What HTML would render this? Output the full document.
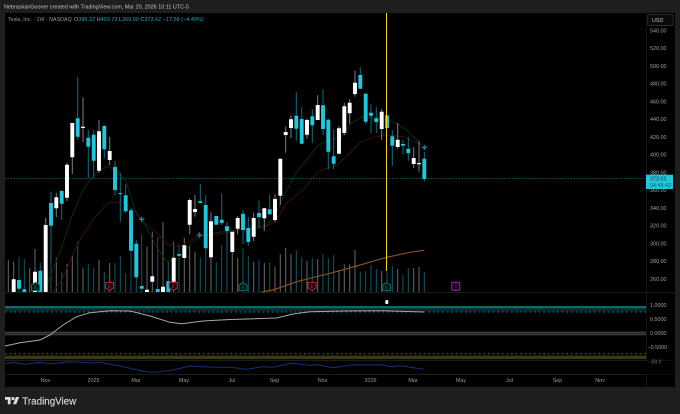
<!DOCTYPE html>
<html><head><meta charset="utf-8"><style>
html,body{margin:0;padding:0;background:#1e1e1e;width:680px;height:414px;overflow:hidden}
svg{position:absolute;left:0;top:0;display:block}
text{font-family:"Liberation Sans",sans-serif}
</style></head><body>
<svg width="680" height="414" viewBox="0 0 680 414" xmlns="http://www.w3.org/2000/svg">
<rect width="680" height="414" fill="#1e1e1e"/>
<rect x="5" y="13" width="670" height="374" fill="#000"/>
<text x="4" y="8.5" font-size="5.43" fill="#c4c4c4">NebraskanGooner created with TradingView.com, Mar 20, 2026 10:11 UTC-5</text>
<text x="8" y="21" font-size="5.3" fill="#9a9a9a">Tesla, Inc. · 1W · NASDAQ</text>
<text x="74" y="21" font-size="5.5" fill="#9a9a9a">O<tspan fill="#1aa9bd">396.22</tspan> H<tspan fill="#1aa9bd">403.73</tspan> L<tspan fill="#1aa9bd">369.90</tspan> C<tspan fill="#1aa9bd">373.62</tspan> <tspan fill="#1aa9bd">−17.58 (−4.49%)</tspan></text>

<!-- separators -->
<path d="M5 292.5H675M5 360.5H675M5 374.5H675" stroke="#1c1c1c" stroke-width="1" fill="none"/>
<path d="M646.5 13V387" stroke="#141414" stroke-width="1" fill="none"/>

<!-- volumes -->
<path fill="none" stroke="#6a6a6a" stroke-width="1" d="M8.3 260V292M13.7 261.7V292M29.7 267.7V292M35 249V292M56.3 258V292M67 264V292M72.3 255V292M83 268V292M99 260V292M109.7 263V292M147 246.7V292M152.3 231.7V292M163 222V292M173.7 241.7V292M184.3 237.7V292M189.7 246V292M195 251.7V292M211 257V292M232.3 252V292M237.7 258V292M253.7 262V292M264.3 263V292M275 266.7V292M280.3 254.3V292M285.7 248V292M291 254.3V292M307 260.7V292M317.7 259.3V292M339 270V292M344.3 264.3V292M349.7 264.3V292M355 250V292M381.7 271V292M397.7 268.7V292M413.7 268V292M419 267V292"/>
<path fill="none" stroke="#0d5a68" stroke-width="1" d="M19 257V292M24.3 259V292M40.3 262.7V292M51 262V292M61.7 271.7V292M77.7 241.7V292M88.3 264V292M93.7 268V292M104.3 271.7V292M115 263V292M120.3 255.7V292M125.7 273V292M131 251V292M136.3 277V292M141.7 235V292M157.7 237V292M168.3 261.7V292M179 244V292M200.3 258V292M205.7 250V292M216.3 262V292M221.7 245V292M227 250V292M243 248V292M248.3 255.7V292M259 260V292M269.7 262V292M296.3 250.3V292M301.7 257.3V292M312.3 258.3V292M323 254.3V292M328.3 258.3V292M333.7 255V292M360.3 271.7V292M365.7 271V292M371 265V292M376.3 269V292M387 272V292M392.3 266V292M403 275V292M408.3 268.3V292M424.3 271.7V292"/>

<!-- volume MA -->
<path fill="none" stroke="#8a4f1c" stroke-width="1.2" d="M261.7 292L273 290L296.7 281.7L330 273.3L356.7 266L386.7 257.3L410 252.3L424.3 250.3"/>

<!-- MAs -->
<path fill="none" stroke="#0b2c14" stroke-width="1" d="M48 283L56.7 260L63.3 243L71.7 216.7L81.7 193L90 180L98 172L108 166L120 173L126.7 183L135 210L145 225L156.7 246.7L166.7 261.7L178 259L191.7 243L200 236.7L213 233L230 231L256.7 227L266.7 225L275 216.7L281.7 200L287 190L296.7 171.7L306.7 160L318 145L330 140L341.7 136.7L351.7 123L361.7 116.7L376.7 118L393 121.7L406.7 130L421.7 145"/>
<path fill="none" stroke="#3e0c0f" stroke-width="1" d="M53 292L61.7 280L71.7 256.7L81.7 236.7L96.7 215L108 203L121.7 201.7L131.7 208L143 221.7L156.7 233L168 245L180 247L196.7 236.7L213 235L230 232.5L243 229L263 228L275 221.7L286.7 203L303 190L318 171.7L336.7 165L348 155L360 142.7L373.3 137.3L386.7 135L403 136.7L421.7 145"/>

<!-- last price line -->
<path d="M5 178.5H646" stroke="#0f5a66" stroke-width="1" stroke-dasharray="1.4 1.4" fill="none"/>

<!-- wicks -->
<path fill="none" stroke="#808080" stroke-width="1" d="M45.7 218V225M56.3 193V217M67 162.7V201M72.3 157V174M83 97.3V142M99 120V172.7M109.7 136.7V165M189.7 198.3V234M195 195V216.7M211 212.3V221M237.7 216V234.3M253.7 212.7V241M264.3 207.7V231M275 194.3V221.7M280.3 195V205M285.7 126.7V152.7M291 115.3V138M307 118.3V138.7M317.7 95.3V120M339 126V154M344.3 102.7V135.3M349.7 99.3V124M355 70.7V96.7M381.7 108.7V140M397.7 123V148.7M413.7 147.3V168M419 140.7V171.7"/>
<path fill="none" stroke="#0f6f80" stroke-width="1" d="M51 191.7V262M61.7 190V220M77.7 76.7V140M88.3 130V178M93.7 130V178M104.3 125V158M115 160.7V195M120.3 173V221.7M125.7 184.3V213M131 208V251M136.3 240V278M200.3 184V203M205.7 195V250M221.7 193.3V225M227 222V250M243 210.3V243.7M248.3 217V246M259 200.7V227.7M269.7 194.7V215M296.3 92.3V140.7M301.7 107.3V144M312.3 109.3V142.7M323 89.3V135M328.3 119V169.3M333.7 129.3V169.3M360.3 67.3V89M365.7 93V124M371 104V133.3M376.3 106.7V133M392.3 130V166M403 140V154.7M408.3 137.3V160.7M424.3 152V181.7"/>

<!-- bodies -->
<path fill="none" stroke="#fff" stroke-width="3.9" d="M13.7 279.3V292M35 271.7V292M45.7 225V292M56.3 197.3V208.3M67 164.7V197.7M72.3 123V157.3M83 126.8V128M99 131.3V170.7M109.7 151V160M147 289.7V292M152.3 276.3V281.7M163 286.7V292M173.7 257.7V281.7M184.3 245.3V258M189.7 200V224.7M195 209V212M211 221.3V257.3M232.3 231.7V252M237.7 218V228.7M253.7 218V236.7M264.3 208.3V218.3M275 199V220M280.3 158.7V195.7M285.7 132V135M291 119.3V128M307 120V134.7M317.7 105V120M339 128.3V153.7M344.3 106.3V133M349.7 102.7V113.3M355 82.7V94M381.7 111.7V129M397.7 139.7V147M413.7 158V164M419 163V164.3"/>
<path fill="none" stroke="#1fc6dc" stroke-width="3.9" d="M19 280V288.7M24.3 289.3V292M40.3 270.7V292M51 203V225.7M61.7 191V203.7M77.7 118.3V136.7M88.3 137.7V146.7M93.7 134.7V160.7M104.3 126V149.3M115 167V190M120.3 193V194M125.7 195.3V211.3M131 210.3V250.7M136.3 243.7V277.3M141.7 286V288.7M157.7 289V292M168.3 281.3V292M179 254V255.7M200.3 201.3V203M205.7 205V248.3M216.3 216V224.7M221.7 219.7V223M227 226.3V231M243 213.7V230M248.3 228V242M259 213V217.3M269.7 209.3V214.3M296.3 115.7V128.7M301.7 119V143.7M312.3 116.3V125.3M323 105.3V129M328.3 119.7V151.7M333.7 156.3V163.7M360.3 75V88.7M365.7 93.7V121.7M371 112.7V115.7M376.3 118.3V122M387 115.3V128M392.3 136.3V145.7M403 144V145.7M408.3 148.7V153.3M424.3 158.7V179"/>

<!-- plus marks -->
<path fill="none" stroke="#1a7f9c" stroke-width="1.5" d="M141.7 216.7V222M139 219.3H144.4M199.5 232.3V237.7M196.8 235H202.2M424.3 145V150M421.6 147.5H427"/>

<!-- yellow vertical line -->
<path d="M386.5 13V271" stroke="#f7d51d" stroke-width="1" fill="none"/>

<!-- earnings badges -->
<g fill="#03110f" stroke="#0e6a66" stroke-width="1.1">
<path d="M31.5 290.5V285L35.5 282.5L39.5 285V290.5Z"/>
<path d="M239 290.5V285L243 282.5L247 285V290.5Z"/>
<path d="M382.5 290.5V285L386.5 282.5L390.5 285V290.5Z"/>
</g>
<g fill="#160306" stroke="#a82836" stroke-width="1.1">
<path d="M105.5 282.5H113.5V288L109.5 290.5L105.5 288Z"/>
<path d="M169.3 282.5H177.3V288L173.3 290.5L169.3 288Z"/>
<path d="M308 282.5H316V288L312 290.5L308 288Z"/>
</g>
<rect x="451.8" y="282.3" width="8" height="8" rx="1" fill="#120314" stroke="#9c1fb0" stroke-width="1.1"/>
<g font-size="5" text-anchor="middle">
<text x="35.5" y="289" fill="#0e6a66">E</text><text x="243" y="289" fill="#0e6a66">E</text><text x="386.5" y="289" fill="#0e6a66">E</text>
<text x="109.5" y="288" fill="#a82836">E</text><text x="173.3" y="288" fill="#a82836">E</text><text x="312" y="288" fill="#a82836">E</text>
<text x="456" y="288.2" fill="#9c1fb0">T</text>
</g>

<!-- oscillator bands -->
<rect x="5" y="306" width="641" height="2.4" fill="#0a6b6b"/>
<rect x="5" y="308.4" width="641" height="3" fill="#052a2c"/>
<path d="M5 312H646" stroke="#0f7d86" stroke-width="1" stroke-dasharray="1.8 2.8" fill="none"/>
<rect x="5" y="331.7" width="641" height="3.6" fill="#3e3e3e"/>
<rect x="5" y="333" width="641" height="1" fill="#262626"/>
<path d="M5 353.8H646" stroke="#66661f" stroke-width="1" stroke-dasharray="1.8 2.8" fill="none"/>
<rect x="5" y="355.6" width="641" height="3.5" fill="#3a3a16"/>
<path fill="none" stroke="#a8aaa8" stroke-width="1" d="M5 346L20 342.7L40 340L50 335L63 325L76.7 316.7L90 312.7L110 310.7L130 311L150 316L170 322.3L181.7 323.7L203 321L230 319.5L276.7 318L293 314L310 311.7L343 311L383 310.7L424 312"/>
<path fill="none" stroke="#12307a" stroke-width="1" d="M5 364L13 362.3L25 364.3L40 362.3L50 363.7L70 361.7L90 363L100 362.3L120 366L146.7 372L156.7 372.3L173 370L190 366L213 367.3L230 367.3L246.7 369.3L263 366.7L273 367.3L291.7 363.3L310 365.3L318 364.7L333 367.7L353 364.7L366.7 365L380 364.7L391.7 366.7L400 365.7L424.3 369.3"/>
<rect x="385.3" y="300" width="3" height="4" rx="1" fill="#fff"/>

<!-- price axis -->
<rect x="647.7" y="14.5" width="25.5" height="11" rx="1.5" fill="#0a0a0a" stroke="#2c2c2c" stroke-width="1"/>
<text x="652" y="22" font-size="5.4" fill="#c0c0c0">USD</text>
<g font-size="5.4" fill="#a0a0a0">
<text x="650" y="32.3">540.00</text><text x="650" y="50">520.00</text><text x="650" y="67.8">500.00</text><text x="650" y="85.6">480.00</text><text x="650" y="103.3">460.00</text><text x="650" y="121.1">440.00</text><text x="650" y="138.8">420.00</text><text x="650" y="156.6">400.00</text><text x="650" y="174.4">380.00</text><text x="650" y="192.2">360.00</text><text x="650" y="209.9">340.00</text><text x="650" y="227.7">320.00</text><text x="650" y="245.4">300.00</text><text x="650" y="263.2">280.00</text><text x="650" y="281">260.00</text>
<text x="650" y="307.2">1.0000</text><text x="650" y="321.2">0.5000</text><text x="650" y="335.2">0.0000</text><text x="647.5" y="349">−0.5000</text>
</g>
<rect x="646" y="174.7" width="27" height="14.3" fill="#1fc6dc"/>
<text x="650" y="180.6" font-size="5.4" fill="#0b3a44">373.62</text>
<text x="650" y="187" font-size="5.4" fill="#0e5f6e">04:48:43</text>
<rect x="646" y="360.5" width="29" height="14" fill="#000"/>
<text x="650" y="363.4" font-size="5" fill="#7a7a7a">-50.0</text>

<!-- time axis -->
<g font-size="5.4" fill="#9a9a9a" text-anchor="middle">
<text x="45.5" y="382">Nov</text><text x="93.5" y="382">2025</text><text x="136" y="382">Mar</text><text x="184" y="382">May</text><text x="232" y="382">Jul</text><text x="274.5" y="382">Sep</text><text x="322.5" y="382">Nov</text><text x="370.5" y="382">2026</text><text x="413" y="382">Mar</text><text x="461" y="382">May</text><text x="509.5" y="382">Jul</text><text x="557.5" y="382">Sep</text><text x="600" y="382">Nov</text>
</g>

<!-- logo -->
<g transform="translate(5 395.4) scale(.4)" fill="#dcdcdc">
<path d="M14 22H7V11H0V4h14v18zM28 22h-8l7.5-18h8L28 22z"/><circle cx="20" cy="8" r="4"/>
</g>
<text x="22.3" y="404.3" font-size="9.8" fill="#d8d8d8" stroke="#d8d8d8" stroke-width=".15">TradingView</text>
</svg>
</body></html>
